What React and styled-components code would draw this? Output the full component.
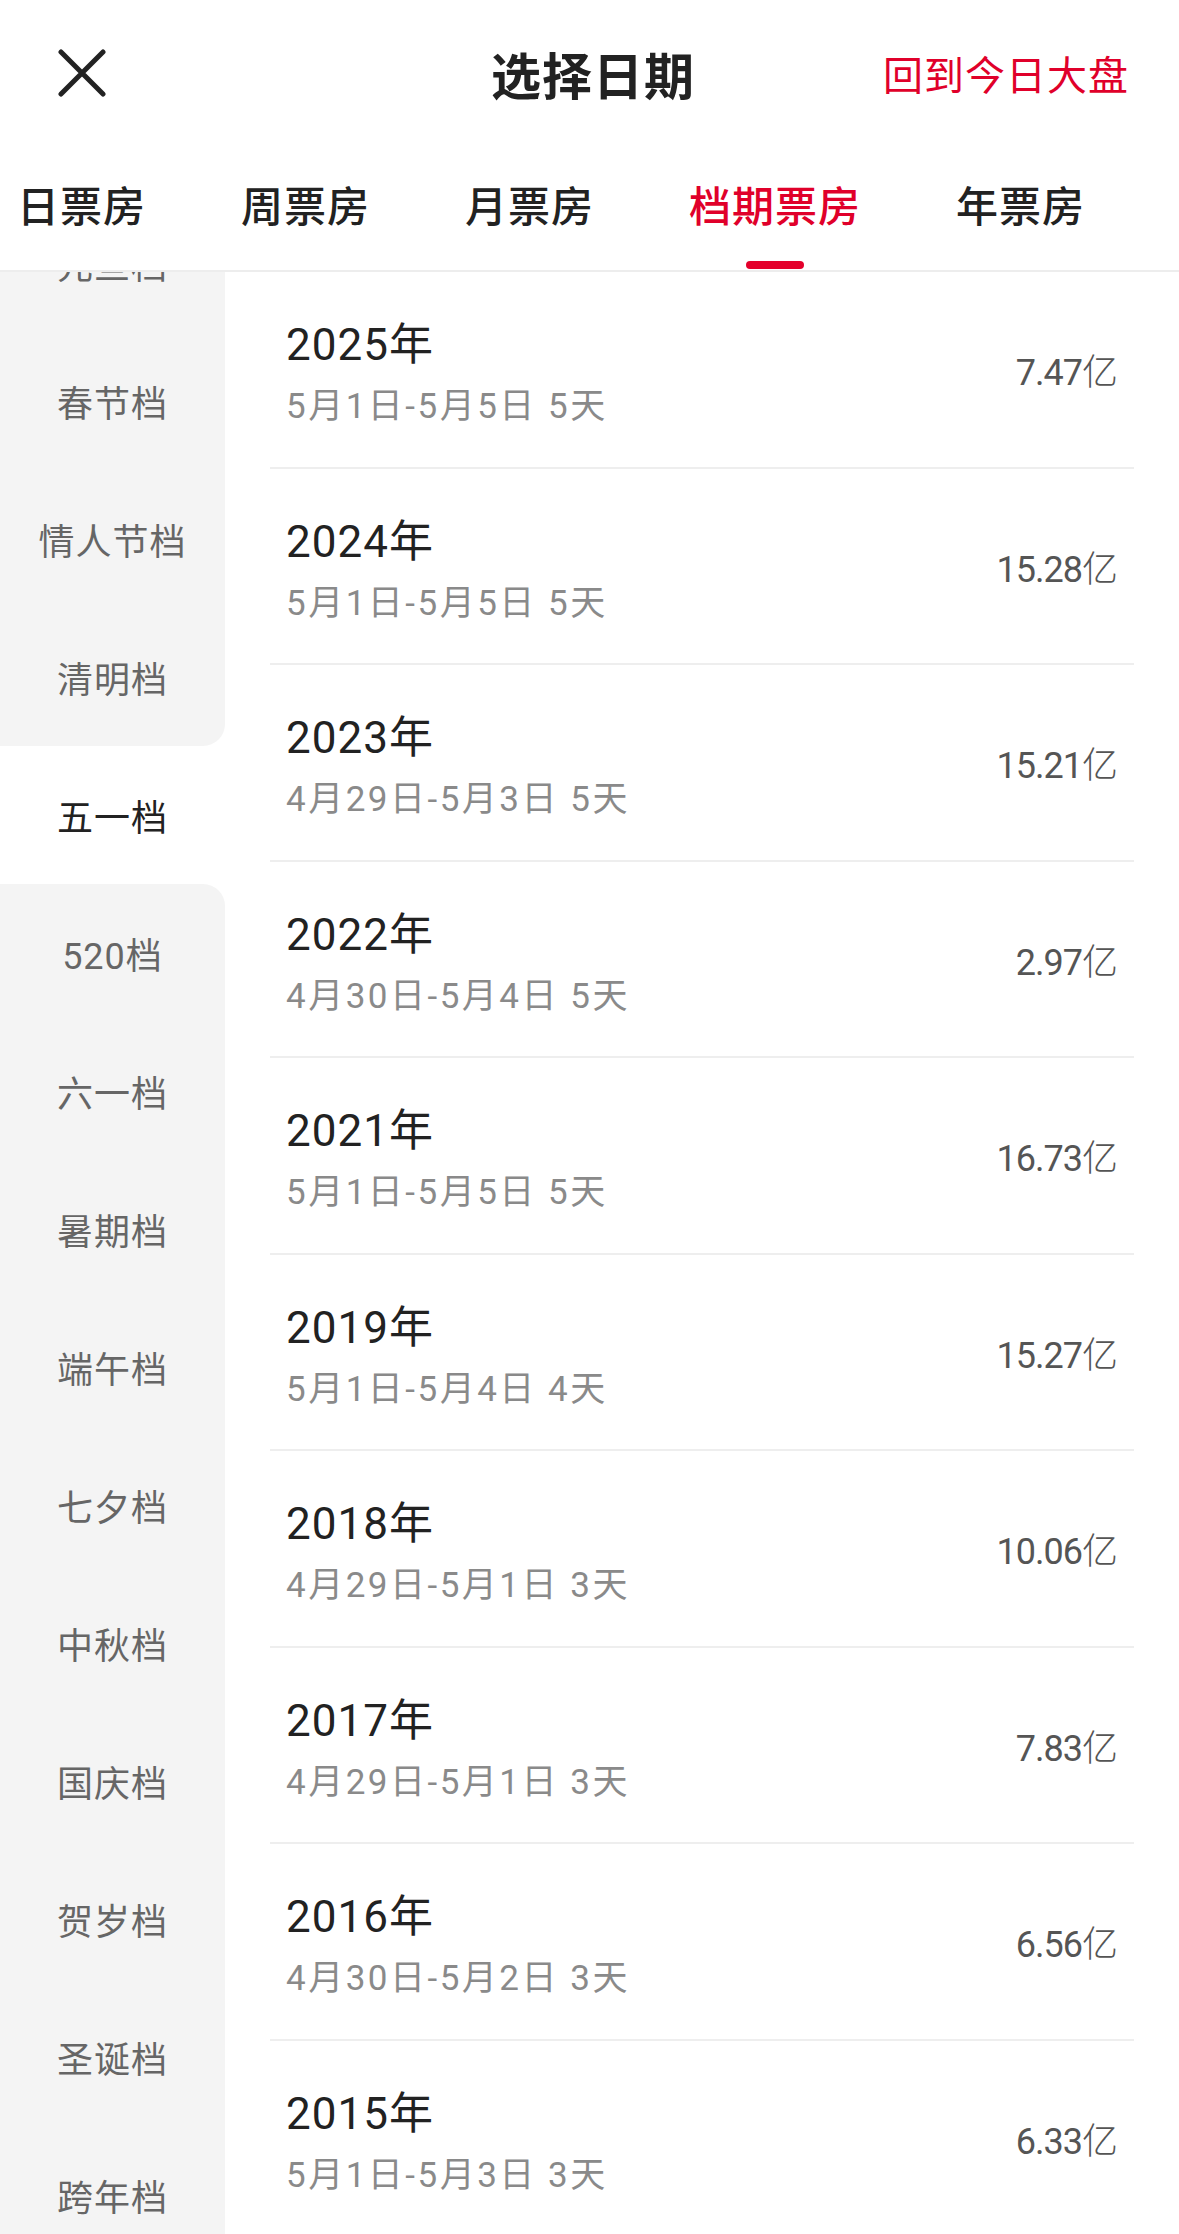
import React from 'react';
import styled, { createGlobalStyle } from 'styled-components';

const GlobalStyle = createGlobalStyle`
  body {
    margin: 0;
    background: #fff;
    font-family: Roboto, "Noto Sans CJK SC", sans-serif;
    color: #222;
  }
`;

const Page = styled.div`
  width: 1179px;
  height: 2234px;
  display: flex;
  flex-direction: column;
  overflow: hidden;
  background: #fff;
`;

const NavBar = styled.div`
  height: 150px;
  flex-shrink: 0;
  box-sizing: border-box;
  display: grid;
  grid-template-columns: 1fr auto 1fr;
  align-items: center;
  padding: 0 50px 4px 57px;
`;

const CloseButton = styled.button`
  justify-self: start;
  width: 50px;
  height: 50px;
  padding: 0;
  border: none;
  background: none;
  display: flex;
  align-items: center;
  justify-content: center;
`;

const Title = styled.div`
  font-size: 50px;
  font-weight: 700;
  letter-spacing: 1px;
  color: #222;
`;

const BackToday = styled.div`
  justify-self: end;
  font-size: 40px;
  color: #e0002a;
  letter-spacing: 1px;
`;

const TabBar = styled.div`
  height: 122px;
  flex-shrink: 0;
  box-sizing: border-box;
  display: flex;
  gap: 95px;
  padding-left: 17px;
  border-bottom: 2px solid #ededed;
`;

const Tab = styled.div`
  display: flex;
  flex-direction: column;
  align-items: center;
  padding-top: 28px;
  font-size: 42px;
  line-height: 60px;
  font-weight: 500;
  letter-spacing: 1px;
  color: ${p => (p.$active ? '#e0002a' : '#222')};
`;

const Indicator = styled.div`
  margin-top: auto;
  margin-bottom: 1px;
  width: 58px;
  height: 8px;
  border-radius: 4px;
  background: #e4002b;
`;

const Body = styled.div`
  flex: 1;
  display: flex;
  overflow: hidden;
`;

// scrolled down a little, so the first season is mostly hidden under the tabs
const Sidebar = styled.div`
  width: 225px;
  flex-shrink: 0;
  display: flex;
  flex-direction: column;
  margin-top: -78px;
  background: #fff;
`;

const SideItem = styled.div`
  height: 138px;
  flex-shrink: 0;
  display: flex;
  align-items: center;
  justify-content: center;
  font-size: 36px;
  letter-spacing: 1px;
  color: ${p => (p.$active ? '#222' : '#666')};
  background: ${p => (p.$active ? '#fff' : '#f4f4f4')};
  border-bottom-right-radius: ${p => (p.$beforeActive ? '22px' : '0')};
  border-top-right-radius: ${p => (p.$afterActive ? '22px' : '0')};
`;

const List = styled.div`
  flex: 1;
  display: flex;
  flex-direction: column;
  padding: 0 45px;
`;

const Row = styled.div`
  height: 196.5px;
  flex-shrink: 0;
  box-sizing: border-box;
  display: flex;
  align-items: center;
  justify-content: space-between;
  padding: 0 16px;
  border-bottom: 2px solid #eeeeee;
`;

const Info = styled.div`
  display: flex;
  flex-direction: column;
  padding-top: 10px;
`;

const Year = styled.div`
  font-size: 44px;
  line-height: 56px;
  letter-spacing: 1px;
  color: #222;
`;

const Period = styled.div`
  margin-top: 10px;
  font-size: 35px;
  line-height: 48px;
  letter-spacing: 2.5px;
  color: #8a8a8a;
`;

const Amount = styled.div`
  font-size: 36px;
  letter-spacing: -1px;
  color: #555;
`;

const Unit = styled.span`
  font-weight: 300;
  letter-spacing: 0;
`;

const tabs = ['日票房', '周票房', '月票房', '档期票房', '年票房'];

const seasons = [
  '元旦档', '春节档', '情人节档', '清明档', '五一档', '520档', '六一档', '暑期档',
  '端午档', '七夕档', '中秋档', '国庆档', '贺岁档', '圣诞档', '跨年档',
];

const records = [
  { year: '2025', period: '5月1日-5月5日 5天', amount: '7.47' },
  { year: '2024', period: '5月1日-5月5日 5天', amount: '15.28' },
  { year: '2023', period: '4月29日-5月3日 5天', amount: '15.21' },
  { year: '2022', period: '4月30日-5月4日 5天', amount: '2.97' },
  { year: '2021', period: '5月1日-5月5日 5天', amount: '16.73' },
  { year: '2019', period: '5月1日-5月4日 4天', amount: '15.27' },
  { year: '2018', period: '4月29日-5月1日 3天', amount: '10.06' },
  { year: '2017', period: '4月29日-5月1日 3天', amount: '7.83' },
  { year: '2016', period: '4月30日-5月2日 3天', amount: '6.56' },
  { year: '2015', period: '5月1日-5月3日 3天', amount: '6.33' },
];

const CloseIcon = () => (
  <svg width="48" height="48" viewBox="0 0 48 48">
    <path d="M3 3 L45 45 M45 3 L3 45" stroke="#222" strokeWidth="5" strokeLinecap="round" />
  </svg>
);

const App = () => {
  const activeTab = 3;
  const activeSeason = 4;

  return (
    <Page>
      <GlobalStyle />
      <NavBar>
        <CloseButton>
          <CloseIcon />
        </CloseButton>
        <Title>选择日期</Title>
        <BackToday>回到今日大盘</BackToday>
      </NavBar>

      <TabBar>
        {tabs.map((t, i) => (
          <Tab key={t} $active={i === activeTab}>
            {t}
            {i === activeTab && <Indicator />}
          </Tab>
        ))}
      </TabBar>

      <Body>
        <Sidebar>
          {seasons.map((s, i) => (
            <SideItem
              key={s}
              $active={i === activeSeason}
              $beforeActive={i === activeSeason - 1}
              $afterActive={i === activeSeason + 1}>
              {s}
            </SideItem>
          ))}
        </Sidebar>

        <List>
          {records.map(r => (
            <Row key={r.year}>
              <Info>
                <Year>{r.year}年</Year>
                <Period>{r.period}</Period>
              </Info>
              <Amount>
                {r.amount}
                <Unit>亿</Unit>
              </Amount>
            </Row>
          ))}
        </List>
      </Body>
    </Page>
  );
};

export default App;
